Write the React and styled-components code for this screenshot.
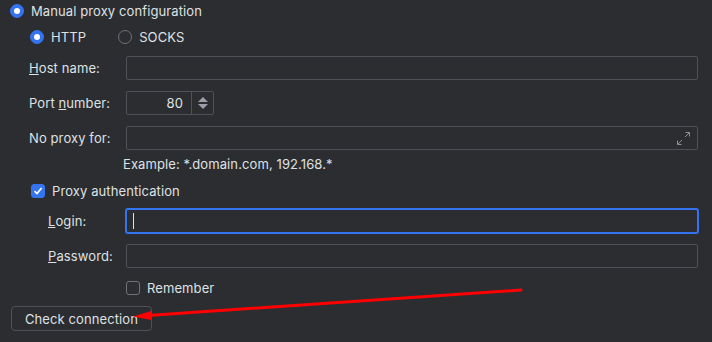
import React from "react";
import styled, { createGlobalStyle } from "styled-components";

const Global = createGlobalStyle`
  html, body {
    margin: 0;
    padding: 0;
    background: #2b2d30;
  }
  body {
    font-family: "Inter", "Noto Sans", sans-serif;
    font-size: 13px;
    letter-spacing: 0.1px;
    color: #dfe1e5;
  }
`;

// 전체 패널
const Panel = styled.div`
  position: relative;
  width: 712px;
  height: 342px;
  overflow: hidden;
  background: #2b2d30;
  display: flex;
  flex-direction: column;
`;

const Row = styled.div`
  display: flex;
  align-items: center;
  height: ${(p) => p.h || 22}px;
  padding-left: ${(p) => p.indent || 0}px;
  margin-top: ${(p) => p.top || 0}px;
  gap: ${(p) => p.gap || 7}px;
`;

const RadioCircle = styled.span`
  width: 14px;
  height: 14px;
  box-sizing: border-box;
  border-radius: 50%;
  flex-shrink: 0;
  display: flex;
  align-items: center;
  justify-content: center;
  background: ${(p) => (p.checked ? "#3574f0" : "transparent")};
  border: 1px solid ${(p) => (p.checked ? "#3574f0" : "#6f737a")};
  &::after {
    content: "";
    display: ${(p) => (p.checked ? "block" : "none")};
    width: 6px;
    height: 6px;
    border-radius: 50%;
    background: #ffffff;
  }
`;

const Box = styled.span`
  width: 14px;
  height: 14px;
  box-sizing: border-box;
  border-radius: 3px;
  flex-shrink: 0;
  display: flex;
  align-items: center;
  justify-content: center;
  background: ${(p) => (p.checked ? "#3574f0" : "transparent")};
  border: 1px solid ${(p) => (p.checked ? "#3574f0" : "#6f737a")};
`;

const Label = styled.span`
  white-space: nowrap;
  line-height: 16px;
`;

const Form = styled.div`
  display: grid;
  grid-template-columns: ${(p) => p.labelW}px 1fr;
  align-items: center;
  row-gap: ${(p) => p.rowGap || 11}px;
  padding-left: ${(p) => p.indent}px;
  padding-right: 14px;
  margin-top: ${(p) => p.top || 0}px;
`;

const Field = styled.div`
  position: relative;
  height: 24px;
  box-sizing: border-box;
  border: 1px solid #4e5157;
  border-radius: 2px;
  background: #2b2d30;
  display: flex;
  align-items: center;
  width: ${(p) => (p.w ? `${p.w}px` : "auto")};
  ${(p) =>
    p.focused &&
    `
    border-color: #3574f0;
    box-shadow: 0 0 0 1px #3574f0;
  `}
`;

const Caret = styled.span`
  width: 1px;
  height: 16px;
  margin-left: 6px;
  background: #dfe1e5;
`;

const PortValue = styled.span`
  flex: 1;
  text-align: right;
  padding-right: 8px;
`;

const Spinner = styled.div`
  width: 21px;
  height: 100%;
  border-left: 1px solid #4e5157;
  display: flex;
  flex-direction: column;
  align-items: center;
  justify-content: center;
  gap: 2px;
`;

const ExpandBtn = styled.span`
  position: absolute;
  right: 6px;
  top: 4px;
  display: flex;
`;

const Hint = styled.div`
  padding-left: 123px;
  margin-top: 6px;
  height: 16px;
  line-height: 16px;
`;

const Button = styled.button`
  margin-left: 11px;
  margin-top: 7px;
  width: 141px;
  height: 25px;
  box-sizing: border-box;
  border: 1px solid #4e5157;
  border-radius: 4px;
  background: #2b2d30;
  color: #dfe1e5;
  font-family: "Inter", "Noto Sans", sans-serif;
  font-size: 13px;
  letter-spacing: 0.1px;
  padding: 0;
`;

const Arrow = styled.svg`
  position: absolute;
  left: 0;
  top: 0;
  pointer-events: none;
`;

const Check = () => (
  <svg width="10" height="10" viewBox="0 0 10 10">
    <path d="M1.5 5.2 L4 7.6 L8.6 2" fill="none" stroke="#fff" strokeWidth="1.7" />
  </svg>
);

export default function App() {
  return (
    <Panel>
      <Global />
      <Row indent={10}>
        <RadioCircle checked />
        <Label>Manual proxy configuration</Label>
      </Row>
      <Row indent={30} top={4}>
        <RadioCircle checked />
        <Label>HTTP</Label>
        <Row indent={25}>
          <RadioCircle />
          <Label>SOCKS</Label>
        </Row>
      </Row>
      <Form labelW={97} indent={29} top={8}>
        <Label>
          <u>H</u>ost name:
        </Label>
        <Field />
        <Label>
          Port <u>n</u>umber:
        </Label>
        <Field w={88}>
          <PortValue>80</PortValue>
          <Spinner>
            <svg width="10" height="5" viewBox="0 0 10 5">
              <path d="M0 5 L5 0 L10 5 Z" fill="#9da0a8" />
            </svg>
            <svg width="10" height="5" viewBox="0 0 10 5">
              <path d="M0 0 L5 5 L10 0 Z" fill="#9da0a8" />
            </svg>
          </Spinner>
        </Field>
        <Label>No proxy for:</Label>
        <Field>
          <ExpandBtn>
            <svg width="15" height="15" viewBox="0 0 15 15" fill="none" stroke="#8c8f94" strokeWidth="1">
              <path d="M9.5 1.5 H13.5 V5.5 M13.5 1.5 L9 6" />
              <path d="M1.5 9.5 V13.5 H5.5 M1.5 13.5 L6 9" />
            </svg>
          </ExpandBtn>
        </Field>
      </Form>
      <Hint>Example: *.domain.com, 192.168.*</Hint>
      <Row indent={31} top={8} h={22}>
        <Box checked>
          <Check />
        </Box>
        <Label>Proxy authentication</Label>
      </Row>
      <Form labelW={78} indent={48} top={7} rowGap={11}>
        <Label>
          <u>L</u>ogin:
        </Label>
        <Field focused>
          <Caret />
        </Field>
        <Label>
          <u>P</u>assword:
        </Label>
        <Field />
      </Form>
      <Row indent={126} top={9}>
        <Box />
        <Label>Remember</Label>
      </Row>
      <Button>Check connection</Button>
      <Arrow width="712" height="342" viewBox="0 0 712 342">
        <path d="M521 290 L148 315.5" stroke="#ff0000" strokeWidth="3" strokeLinecap="round" />
        <path d="M133 316.5 L151 311 L151.5 320 Z" fill="#ff0000" />
      </Arrow>
    </Panel>
  );
}
